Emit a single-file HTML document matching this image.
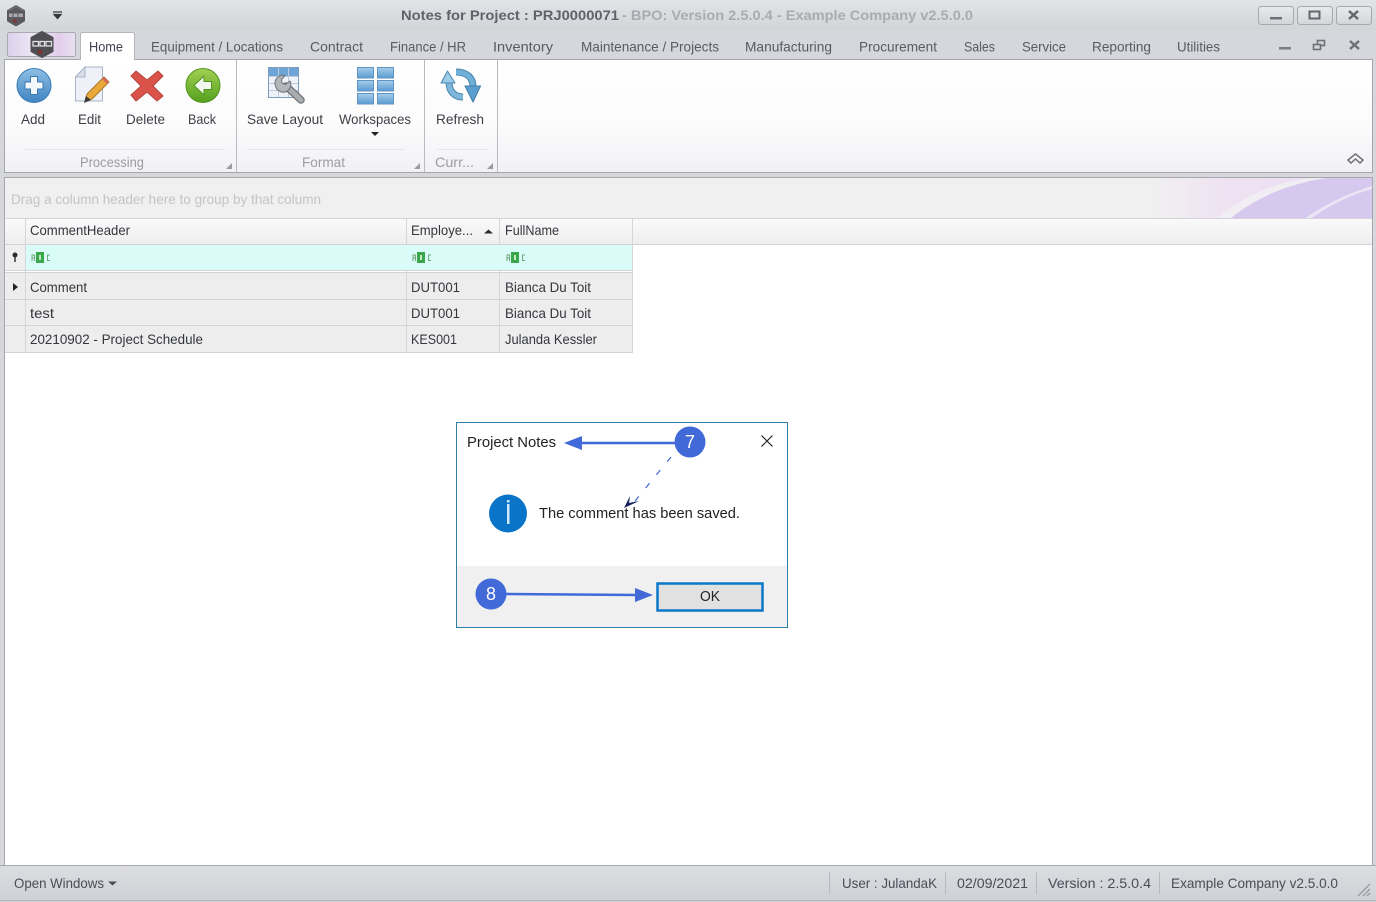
<!DOCTYPE html>
<html><head><meta charset="utf-8"><style>
html,body{margin:0;padding:0;width:1376px;height:902px;overflow:hidden;background:#fff}
svg{display:block;filter:blur(.35px)}
text{font-family:"Liberation Sans",sans-serif;font-size:14px;fill:#3c3f46}
.t{fill:#575b66}
.g{fill:#9a9da3}
.c{fill:#33363c}
</style></head><body>
<svg width="1376" height="902" viewBox="0 0 1376 902" xmlns="http://www.w3.org/2000/svg">
<defs>
<linearGradient id="top" x1="0" y1="0" x2="0" y2="1"><stop offset="0" stop-color="#e2e3e5"/><stop offset="1" stop-color="#d2d4d8"/></linearGradient>
<linearGradient id="rib" x1="0" y1="0" x2="0" y2="1"><stop offset="0" stop-color="#ffffff"/><stop offset="0.6" stop-color="#fbfbfc"/><stop offset="1" stop-color="#f1f1f4"/></linearGradient>
<linearGradient id="stat" x1="0" y1="0" x2="0" y2="1"><stop offset="0" stop-color="#dcdde1"/><stop offset="1" stop-color="#cfd1d6"/></linearGradient>
<linearGradient id="hdr" x1="0" y1="0" x2="0" y2="1"><stop offset="0" stop-color="#fafafa"/><stop offset="1" stop-color="#eeeeef"/></linearGradient>
<linearGradient id="btn" x1="0" y1="0" x2="0" y2="1"><stop offset="0" stop-color="#e9eaec"/><stop offset="1" stop-color="#d4d5d9"/></linearGradient>
<linearGradient id="logo" x1="0" y1="0" x2="1" y2="0"><stop offset="0" stop-color="#dcd0ee"/><stop offset="0.4" stop-color="#efe9f4"/><stop offset="0.75" stop-color="#e2cdec"/><stop offset="1" stop-color="#e8e3f0"/></linearGradient>
<linearGradient id="blue" x1="0" y1="0" x2="0" y2="1"><stop offset="0" stop-color="#8fbfe4"/><stop offset="1" stop-color="#3f84c2"/></linearGradient>
<linearGradient id="green" x1="0" y1="0" x2="0" y2="1"><stop offset="0" stop-color="#a2d052"/><stop offset="1" stop-color="#55a01e"/></linearGradient>
<linearGradient id="cell" x1="0" y1="0" x2="0" y2="1"><stop offset="0" stop-color="#a7cdea"/><stop offset="1" stop-color="#5a9bd2"/></linearGradient>
<linearGradient id="purple" x1="0" y1="0" x2="1" y2="0"><stop offset="0" stop-color="#f0f0f0"/><stop offset="0.3" stop-color="#efe3f2"/><stop offset="1" stop-color="#e6dcf2"/></linearGradient>
</defs>

<!-- window chrome -->
<rect width="1376" height="902" fill="#d6d7db"/>
<rect width="1376" height="30" fill="url(#top)"/>
<rect y="30" width="1376" height="30" fill="#d6d7dc"/>

<!-- app icon -->
<path d="M16 5.500l8.500 5v10.500l-8.500 5-8.500-5v-10.500z" fill="#5a5a5e" stroke="#5a5a5e" stroke-linejoin="round"/>
<path d="M8.500 11l7.500-4.500 7.500 4.500" fill="none" stroke="#77777b"/>
<rect x="9" y="13.500" width="14" height="3.500" fill="#a9a9ad"/>
<path d="M13 13.500v3.500M18 13.500v3.500" stroke="#5a5a5e"/>
<circle cx="15" cy="21" r="2" fill="#7a3a3a"/>
<path d="M53 12h9M54 14.500l3.500 4 3.500-4z" fill="#36383c" stroke="#36383c" stroke-width="1.300"/>

<!-- title -->
<text x="401" y="20" textLength="218" lengthAdjust="spacingAndGlyphs" style="font-weight:bold;fill:#5f636b">Notes for Project : PRJ0000071</text>
<text x="622" y="20" textLength="351" lengthAdjust="spacingAndGlyphs" style="font-weight:bold;fill:#a9abb1">- BPO: Version 2.5.0.4 - Example Company v2.5.0.0</text>

<!-- window buttons -->
<g stroke="#a6a8ad" fill="url(#btn)">
<rect x="1258.500" y="6.500" width="35" height="18" rx="3"/>
<rect x="1297.500" y="6.500" width="35" height="18" rx="3"/>
<rect x="1336.500" y="6.500" width="35" height="18" rx="3"/>
</g>
<rect x="1270" y="17" width="12" height="2.500" fill="#6d7076"/>
<rect x="1309.500" y="11.500" width="10" height="7" fill="none" stroke="#63666c" stroke-width="2"/>
<path d="M1349 11l9 8M1358 11l-9 8" stroke="#63666c" stroke-width="2.500"/>

<!-- logo button -->
<rect x="7.500" y="32.500" width="68" height="24" rx="2" fill="url(#logo)" stroke="#a9a9b0"/>
<path d="M42 31.500l11 6v14l-11 6-11-6v-14z" fill="#4e4e53" stroke="#4e4e53" stroke-linejoin="round"/>
<path d="M33 41.500h5.500v4.500h-5.500zM40 41.500h4.500v4.500h-4.500zM46 41.500h5.500v4.500h-5.500z" fill="none" stroke="#e4e4e6" stroke-width="1.200"/>
<circle cx="40" cy="52" r="2.500" fill="#7a3636"/>

<!-- ribbon -->
<rect x="4.500" y="59.500" width="1368" height="113" fill="url(#rib)" stroke="#a5a7ac"/>
<path d="M80.500 59.500v-25a2 2 0 0 1 2-2h50a2 2 0 0 1 2 2v25" fill="#fff" stroke="#b5b6bb"/>
<rect x="81" y="57" width="53" height="4" fill="#fff"/>
<path d="M236.500 60v112M424.500 60v112M497.500 60v112" stroke="#b9bbc0"/>
<path d="M25 149.500h200M247 149.500h158M438 149.500h50" stroke="#e6e6e9"/>

<!-- tabs -->
<text x="89" y="51.500" textLength="34" lengthAdjust="spacingAndGlyphs" style="fill:#3f4350">Home</text>
<text class="t" x="151" y="51.500" textLength="132" lengthAdjust="spacingAndGlyphs">Equipment / Locations</text>
<text class="t" x="310" y="51.500" textLength="53" lengthAdjust="spacingAndGlyphs">Contract</text>
<text class="t" x="390" y="51.500" textLength="76" lengthAdjust="spacingAndGlyphs">Finance / HR</text>
<text class="t" x="493" y="51.500" textLength="60" lengthAdjust="spacingAndGlyphs">Inventory</text>
<text class="t" x="581" y="51.500" textLength="138" lengthAdjust="spacingAndGlyphs">Maintenance / Projects</text>
<text class="t" x="745" y="51.500" textLength="87" lengthAdjust="spacingAndGlyphs">Manufacturing</text>
<text class="t" x="859" y="51.500" textLength="78" lengthAdjust="spacingAndGlyphs">Procurement</text>
<text class="t" x="964" y="51.500" textLength="31" lengthAdjust="spacingAndGlyphs">Sales</text>
<text class="t" x="1022" y="51.500" textLength="44" lengthAdjust="spacingAndGlyphs">Service</text>
<text class="t" x="1092" y="51.500" textLength="59" lengthAdjust="spacingAndGlyphs">Reporting</text>
<text class="t" x="1177" y="51.500" textLength="43" lengthAdjust="spacingAndGlyphs">Utilities</text>
<rect x="1279" y="47" width="12" height="2.500" fill="#7b7e84"/>
<rect x="1317.500" y="40.500" width="7" height="5" fill="none" stroke="#6d7076" stroke-width="1.600"/>
<rect x="1313.500" y="44.500" width="7" height="5" fill="#d6d7dc" stroke="#6d7076" stroke-width="1.600"/>
<path d="M1350 41l9 8M1359 41l-9 8" stroke="#6d7076" stroke-width="2.500"/>

<!-- Add -->
<circle cx="34" cy="85.500" r="17" fill="url(#blue)" stroke="#3a7cb6"/>
<path d="M30.500 76.500h7v5.500h5.500v7h-5.500v5.500h-7v-5.500h-5.500v-7h5.500z" fill="#f3f8fc" stroke="#3a78b0"/>
<text x="21" y="124" textLength="24" lengthAdjust="spacingAndGlyphs">Add</text>
<!-- Edit -->
<path d="M85 67h17.500v34h-27v-24z" fill="#eef2f8" stroke="#aab4c8"/>
<path d="M75.500 77h9.500v-10z" fill="#d7dee9" stroke="#aab4c8"/>
<path d="M85 101l2-7 17-17 5 5-17 17z" fill="#eba83a" stroke="#a9782a"/>
<path d="M102 79l5 5 2-2-5-5z" fill="#d66a5a"/>
<path d="M84 103l2-7 5 4z" fill="#3c3a38"/>
<text x="78" y="124" textLength="23" lengthAdjust="spacingAndGlyphs">Edit</text>
<!-- Delete -->
<path d="M136 71l11 9 11-9 5 5-10 10 10 10-6 5-10-9-11 9-5-6 10-9-10-10z" fill="#d9534a" stroke="#b5433c"/>
<text x="126" y="124" textLength="39" lengthAdjust="spacingAndGlyphs">Delete</text>
<!-- Back -->
<circle cx="203" cy="85.500" r="17" fill="url(#green)" stroke="#4f9420"/>
<path d="M194 85.500l10-9.500v5.500h7.500v8h-7.500v5.500z" fill="#f3f8ee" stroke="#4f9420" stroke-linejoin="round"/>
<text x="188" y="124" textLength="28" lengthAdjust="spacingAndGlyphs">Back</text>
<!-- Save Layout -->
<rect x="268.500" y="67.500" width="30" height="30" fill="#edf3f9" stroke="#7f9dba"/>
<rect x="269" y="68" width="29" height="8" fill="#6ea5d6"/>
<path d="M278.500 68v29M288.500 68v29M269 76.500h29M269 83.500h29M269 90.500h29" stroke="#bccde0"/>
<path d="M286 86l15 14" stroke="#6f7276" stroke-width="7.500" stroke-linecap="round"/>
<path d="M286 86l15 14" stroke="#a9acb0" stroke-width="5" stroke-linecap="round"/>
<path d="M285 75.500a8 8 0 0 0-9.500 10.500 8 8 0 0 0 11 5.500 8 8 0 0 0 3.500-10.500l-4.500 3.500-3.500-1.500-.5-3.500z" fill="#b4b7ba" stroke="#6f7276" stroke-linejoin="round"/>
<text x="247" y="124" textLength="76" lengthAdjust="spacingAndGlyphs">Save Layout</text>
<!-- Workspaces -->
<g fill="url(#cell)" stroke="#5f95c4">
<rect x="357.500" y="67.500" width="16" height="10.500"/><rect x="377.500" y="67.500" width="16" height="10.500"/>
<rect x="357.500" y="80.500" width="16" height="10.500"/><rect x="377.500" y="80.500" width="16" height="10.500"/>
<rect x="357.500" y="93.500" width="16" height="10.500"/><rect x="377.500" y="93.500" width="16" height="10.500"/>
</g>
<text x="339" y="124" textLength="72" lengthAdjust="spacingAndGlyphs">Workspaces</text>
<path d="M371 132h8l-4 4z" fill="#222"/>
<!-- Refresh -->
<g fill="none" stroke-linecap="butt">
<path d="M449 82C449 92 455 97 463 97" stroke="#4a86b0" stroke-width="7"/>
<path d="M449 82C449 92 455 97 463 97" stroke="#7fb7dc" stroke-width="5"/>
<path d="M473 87C473 77 466 72 456 72" stroke="#4a86b0" stroke-width="7"/>
<path d="M473 87C473 77 466 72 456 72" stroke="#6fafd8" stroke-width="5"/>
</g>
<path d="M447.500 71l-6.500 12h14z" fill="#9ccbe8" stroke="#4a86b0" stroke-linejoin="round"/>
<path d="M473 102l-8-16h15.500z" fill="#5a9fcf" stroke="#3f7ca8" stroke-linejoin="round"/>
<text x="436" y="124" textLength="48" lengthAdjust="spacingAndGlyphs">Refresh</text>

<!-- group labels -->
<text class="g" x="80" y="167" textLength="64" lengthAdjust="spacingAndGlyphs">Processing</text>
<text class="g" x="302" y="167" textLength="43" lengthAdjust="spacingAndGlyphs">Format</text>
<text class="g" x="435" y="167" textLength="39" lengthAdjust="spacingAndGlyphs">Curr...</text>
<path d="M226 169h6v-6zM414 169h6v-6zM487 169h6v-6z" fill="#9a9ca1"/>
<path d="M1348 160l7.500-6 7.500 6-3 3-4.500-4-4.500 4z" fill="none" stroke="#6d7076" stroke-width="1.500"/>

<!-- main content -->
<rect x="4.500" y="177.500" width="1368" height="688" fill="#fff" stroke="#a5a7ac"/>
<rect x="5" y="178" width="1367" height="41" fill="#f0f0f0"/>
<rect x="1154" y="178" width="218" height="41" fill="url(#purple)"/>
<path d="M1220 219c25-22 65-41 110-41h42v41z" fill="#d6c8ee"/>
<path d="M1216 219c28-24 62-38 96-41h14c-40 6-74 22-96 41z" fill="#f0eef2"/>
<path d="M1310 219c20-14 40-24 62-30v-3c-26 8-50 20-68 33z" fill="#ebe5f5"/>
<text x="11" y="204" textLength="310" lengthAdjust="spacingAndGlyphs" style="fill:#c2c4c8">Drag a column header here to group by that column</text>

<!-- grid header -->
<path d="M5 218.500h1367" stroke="#d3d4d7"/>
<rect x="5" y="219" width="1367" height="25" fill="url(#hdr)"/>
<path d="M5 244.500h1367" stroke="#d3d4d7"/>
<path d="M25.500 219v134M406.500 219v134M499.500 219v134M632.500 219v134" stroke="#d5d6d9"/>
<text class="c" x="30" y="235" textLength="100" lengthAdjust="spacingAndGlyphs">CommentHeader</text>
<text class="c" x="411" y="235" textLength="62" lengthAdjust="spacingAndGlyphs">Employe...</text>
<path d="M484 233.500l4.500-4 4.500 4z" fill="#2c2c2c"/>
<text class="c" x="505" y="235" textLength="54" lengthAdjust="spacingAndGlyphs">FullName</text>

<!-- filter row -->
<rect x="5" y="245" width="20" height="25" fill="#efefef"/>
<rect x="26" y="245" width="606" height="25" fill="#dafcf8"/>
<path d="M5 270.500h628M5 272.500h628" stroke="#d2d3d6"/>
<circle cx="15" cy="255" r="2.500" fill="#2d2d2d"/>
<path d="M15 256v6" stroke="#2d2d2d" stroke-width="1.400"/>
<g>
<rect x="36" y="252" width="8" height="11" fill="#3aa84a"/>
<rect x="417" y="252" width="8" height="11" fill="#3aa84a"/>
<rect x="511" y="252" width="8" height="11" fill="#3aa84a"/>
<rect x="39" y="255" width="2" height="5" fill="#bfeac4"/>
<rect x="420" y="255" width="2" height="5" fill="#bfeac4"/>
<rect x="514" y="255" width="2" height="5" fill="#bfeac4"/>
<path d="M32 261v-6h2.500v6M32 258h2.500M413 261v-6h2.500v6M413 258h2.500M507 261v-6h2.500v6M507 258h2.500" fill="none" stroke="#6fa87a" stroke-width="1"/>
<path d="M50 255h-2.500v5.500h2.500M431 255h-2.500v5.500h2.500M525 255h-2.500v5.500h2.500" fill="none" stroke="#6fa87a" stroke-width="1"/>
</g>

<!-- data rows -->
<rect x="5" y="273" width="628" height="80" fill="#ededed"/>
<path d="M5 299.500h628M5 325.500h628M5 352.500h628" stroke="#d3d4d7"/>
<path d="M25.500 273v80M406.500 273v80M499.500 273v80M632.500 244v109" stroke="#d5d6d9"/>
<path d="M13 283l5 4-5 4z" fill="#222"/>
<text class="c" x="30" y="292" textLength="57" lengthAdjust="spacingAndGlyphs">Comment</text>
<text class="c" x="411" y="292" textLength="49" lengthAdjust="spacingAndGlyphs">DUT001</text>
<text class="c" x="505" y="292" textLength="86" lengthAdjust="spacingAndGlyphs">Bianca Du Toit</text>
<text class="c" x="30" y="318" textLength="24" lengthAdjust="spacingAndGlyphs">test</text>
<text class="c" x="411" y="318" textLength="49" lengthAdjust="spacingAndGlyphs">DUT001</text>
<text class="c" x="505" y="318" textLength="86" lengthAdjust="spacingAndGlyphs">Bianca Du Toit</text>
<text class="c" x="30" y="344" textLength="173" lengthAdjust="spacingAndGlyphs">20210902 - Project Schedule</text>
<text class="c" x="411" y="344" textLength="46" lengthAdjust="spacingAndGlyphs">KES001</text>
<text class="c" x="505" y="344" textLength="92" lengthAdjust="spacingAndGlyphs">Julanda Kessler</text>

<!-- dialog -->
<rect x="456.500" y="422.500" width="331" height="205" fill="#fff" stroke="#2f7fa8"/>
<rect x="457" y="566" width="330" height="61" fill="#f0f0f0"/>
<text x="467" y="447" textLength="89" lengthAdjust="spacingAndGlyphs" style="font-size:15px;fill:#222">Project Notes</text>
<path d="M761.500 435.500l11 11M772.500 435.500l-11 11" stroke="#222" stroke-width="1.200"/>
<circle cx="508" cy="513.500" r="19" fill="#0a74c9"/>
<rect x="507" y="504" width="2.500" height="20" fill="#cfe8fa"/>
<rect x="507" y="500" width="2.500" height="2.500" fill="#cfe8fa"/>
<text x="539" y="518" textLength="201" lengthAdjust="spacingAndGlyphs" style="font-size:15px;fill:#222">The comment has been saved.</text>
<rect x="657.500" y="583.500" width="105" height="27" fill="#e1e1e1" stroke="#0b78c9" stroke-width="2.500"/>
<text x="700" y="601" textLength="20" lengthAdjust="spacingAndGlyphs" style="font-size:15px;fill:#222">OK</text>

<!-- annotations -->
<path d="M676 443h-96" stroke="#4169d8" stroke-width="2.500"/>
<path d="M582 436v14l-18-7z" fill="#4169d8"/>
<circle cx="690" cy="442" r="15.500" fill="#4169d8"/>
<text x="685" y="448" textLength="10" lengthAdjust="spacingAndGlyphs" style="font-size:18px;fill:#fff">7</text>
<path d="M671 457l-36 44" stroke="#4169d8" stroke-width="1.200" stroke-dasharray="6 11"/>
<path d="M624 508l6-12-1 7 10-2z" fill="#14205c"/>
<circle cx="491" cy="594" r="15.500" fill="#4169d8"/>
<text x="486" y="600" textLength="10" lengthAdjust="spacingAndGlyphs" style="font-size:18px;fill:#fff">8</text>
<path d="M505 594l132 1" stroke="#4169d8" stroke-width="2.500"/>
<path d="M635 588v14l18-7z" fill="#4169d8"/>

<!-- status bar -->
<rect y="866" width="1376" height="36" fill="url(#stat)"/>
<path d="M0 865.500h1376" stroke="#a5a7ac"/>
<path d="M0 900.500h1376" stroke="#b5b7bc"/>
<text x="14" y="888" textLength="90" lengthAdjust="spacingAndGlyphs" style="fill:#494d58">Open Windows</text>
<path d="M108 881.500h9l-4.500 4z" fill="#494d58"/>
<path d="M829.500 872v22M945.500 872v22M1036.500 872v22M1159.500 872v22" stroke="#b7b9be"/>
<text x="842" y="888" textLength="95" lengthAdjust="spacingAndGlyphs" style="fill:#494d58">User : JulandaK</text>
<text x="957" y="888" textLength="71" lengthAdjust="spacingAndGlyphs" style="fill:#494d58">02/09/2021</text>
<text x="1048" y="888" textLength="103" lengthAdjust="spacingAndGlyphs" style="fill:#494d58">Version : 2.5.0.4</text>
<text x="1171" y="888" textLength="167" lengthAdjust="spacingAndGlyphs" style="fill:#494d58">Example Company v2.5.0.0</text>
<path d="M1358 896l12-12M1363 896l7-7M1367 896l3-3" stroke="#8f9197" stroke-width="1.200"/>
</svg>
</body></html>
